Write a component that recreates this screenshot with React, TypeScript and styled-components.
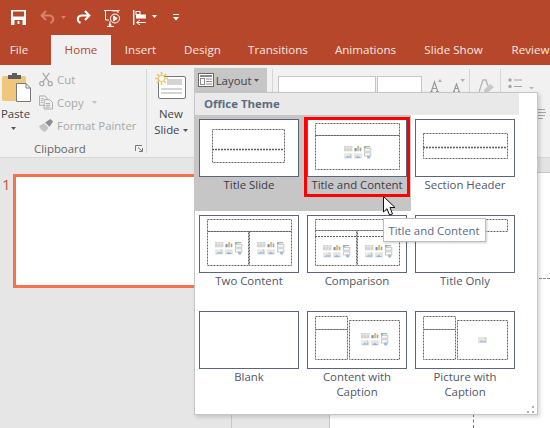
import React from "react";
import styled, { createGlobalStyle } from "styled-components";

const Global = createGlobalStyle`
  html, body { margin: 0; padding: 0; background: #fff; }
  #root { width: 550px; height: 428px; overflow: hidden; }
  * { box-sizing: border-box; }
`;

const FONT = `"Open Sans", "Noto Sans", "Liberation Sans", sans-serif`;

const Page = styled.div`
  position: relative;
  width: 550px;
  height: 428px;
  overflow: hidden;
  display: flex;
  flex-direction: column;
  font-family: ${FONT};
  font-size: 11.4px;
  color: #444;
`;

const TitleBar = styled.div`
  height: 35px;
  background: #b7472a;
  display: flex;
  align-items: flex-start;
  padding: 10px 0 0 11px;
  flex: none;
`;

const QatSlot = styled.div<{ $w: number; $top?: number }>`
  width: ${(p) => p.$w}px;
  padding-top: ${(p) => p.$top ?? 0}px;
  flex: none;
  display: flex;
`;

const TabBar = styled.div`
  height: 30px;
  flex: none;
  background: #b7472a;
  display: flex;
  overflow: hidden;
`;

const Tab = styled.div<{ $w: number; $active?: boolean; $after?: number }>`
  width: ${(p) => p.$w}px;
  margin-right: ${(p) => p.$after ?? 0}px;
  flex: none;
  display: flex;
  align-items: center;
  justify-content: center;
  white-space: nowrap;
  padding-bottom: 1px;
  font-size: 11.6px;
  color: ${(p) => (p.$active ? "#b7472a" : "#f6e7e2")};
  background: ${(p) => (p.$active ? "#f1f1f1" : "transparent")};
`;

const Ribbon = styled.div`
  height: 93px;
  flex: none;
  background: #f1f1f1;
  border-bottom: 1px solid #d8d8d8;
  display: flex;
  padding: 4px 0 3px;
`;

const Group = styled.div<{ $w: number; $divider?: boolean }>`
  width: ${(p) => p.$w}px;
  flex: none;
  height: 84px;
  display: flex;
  position: relative;
  border-right: ${(p) => (p.$divider ? "1px solid #d6d6d6" : "none")};
`;

const ClipColumn = styled.div`
  display: flex;
  flex-direction: column;
  width: 147px;
`;

const ClipBody = styled.div`
  display: flex;
  height: 73px;
  flex: none;
`;

const PasteCol = styled.div`
  width: 36px;
  display: flex;
  flex-direction: column;
  padding: 3px 0 0 2px;
  color: #444;
`;

const BigLabel = styled.div<{ $left?: number; $top?: number }>`
  margin-left: ${(p) => p.$left ?? 0}px;
  margin-top: ${(p) => p.$top ?? 0}px;
  line-height: 16px;
  white-space: nowrap;
  color: #444;
  display: flex;
  align-items: center;
  gap: 3px;
`;

const SmallCol = styled.div`
  display: flex;
  flex-direction: column;
  padding: 3px 0 0 3px;
  gap: 8px;
`;

const SmallRow = styled.div`
  height: 15px;
  display: flex;
  align-items: center;
  gap: 4px;
  color: #a8a8a8;
  white-space: nowrap;
`;

const IconBox = styled.span`
  width: 14px;
  display: flex;
  justify-content: center;
`;

const GroupFooter = styled.div`
  display: flex;
  align-items: center;
  height: 13px;
  flex: none;
  padding: 0 3px 0 34px;
  justify-content: space-between;
  color: #666;
`;

const NewCol = styled.div`
  width: 47px;
  display: flex;
  flex-direction: column;
  align-items: center;
  padding: 3px 2px 0 3px;
`;

const SlideCmds = styled.div`
  width: 79px;
  display: flex;
  flex-direction: column;
`;

const LayoutBtn = styled.div`
  width: 73px;
  height: 24px;
  margin-top: -1px;
  background: #c6c6c6;
  display: flex;
  align-items: center;
  padding-left: 4px;
  gap: 2px;
  color: #444;
`;

const FontRow = styled.div`
  display: flex;
  align-items: flex-start;
  padding: 7px 0 0 5px;
  gap: 1px;
`;

const Combo = styled.div<{ $w: number }>`
  width: ${(p) => p.$w}px;
  height: 24px;
  background: #fff;
  border: 1px solid #c6c6c6;
  display: flex;
  align-items: flex-end;
  justify-content: flex-end;
  padding: 0 3px 4px 0;
`;

const GrowIcons = styled.div`
  display: flex;
  gap: 10px;
  padding: 10px 0 0 7px;
`;

const ClearCol = styled.div`
  display: flex;
  padding: 10px 0 0 9px;
`;

const ParaCol = styled.div`
  display: flex;
  flex-direction: column;
`;

const ParaRow = styled.div`
  display: flex;
  padding: 9px 0 0 7px;
  gap: 9px;
`;

const AlignRow = styled.div`
  padding: 16px 0 0 36px;
  display: flex;
`;

const Workspace = styled.div`
  flex: 1;
  display: flex;
  background: #e6e6e6;
`;

const ThumbPane = styled.div`
  width: 232px;
  flex: none;
  border-right: 1px solid #c6c6c6;
  padding: 16px 0 0 2px;
  display: flex;
  gap: 0;
`;

const SlideNumber = styled.div`
  width: 11px;
  flex: none;
  font-size: 15px;
  line-height: 21px;
  color: #c9573a;
`;

const SlideThumb = styled.div`
  width: 200px;
  height: 114px;
  background: #fff;
  border: 3px solid #f4734f;
`;

const GrayGap = styled.div`
  width: 97px;
  flex: none;
`;

const Canvas = styled.div`
  flex: 1;
  display: flex;
  flex-direction: column;
  border-left: 1px solid #c6c6c6;
`;

const RulerStrip = styled.div`
  height: 15px;
  flex: none;
  background: #e3e3e3;
  border-bottom: 1px solid #c8c8c8;
`;

const CanvasBody = styled.div`
  flex: 1;
  background: #fff;
  position: relative;
`;

const GuideH = styled.div`
  position: absolute;
  left: 209px;
  right: 0;
  top: 105px;
  border-top: 1px dashed #8a8a8a;
`;

const GuideV = styled.div`
  position: absolute;
  left: 143px;
  bottom: 0;
  height: 14px;
  border-left: 1px dashed #777;
`;

const Menu = styled.div`
  position: absolute;
  left: 194px;
  top: 92px;
  width: 344px;
  height: 323px;
  background: #fff;
  border: 1px solid #c6c6c6;
  box-shadow: 2px 2px 4px rgba(0, 0, 0, 0.16);
`;

const MenuHeader = styled.div`
  width: 324px;
  height: 22px;
  background: #e9e9e9;
  color: #5b6b82;
  font-weight: 700;
  display: flex;
  align-items: center;
  padding: 0 0 2px 9px;
`;

const Grid = styled.div`
  display: grid;
  grid-template-columns: repeat(3, 108px);
  grid-auto-rows: 96px;
`;

const Cell = styled.div<{ $active?: boolean }>`
  position: relative;
  background: ${(p) => (p.$active ? "#c6c6c6" : "transparent")};
  padding: 4px 4px 0;
  text-align: center;
  color: ${(p) => (p.$active ? "#3d3a4c" : "#525667")};
`;

const Thumb = styled.svg`
  display: block;
  width: 100px;
  height: 58px;
  background: #fff;
  border: 1px solid #5b6579;
`;

const CellLabel = styled.div`
  line-height: 15px;
  white-space: pre-line;
`;

const RedBox = styled.div`
  position: absolute;
  left: 1px;
  top: 2px;
  width: 106px;
  height: 80px;
  border: 3.5px solid #ff0000;
  pointer-events: none;
`;

const Grip = styled.svg`
  position: absolute;
  right: 3px;
  bottom: 1px;
`;

const Tooltip = styled.div`
  position: absolute;
  left: 383px;
  top: 218px;
  width: 103px;
  height: 24px;
  background: #fff;
  border: 1px solid #bfbfbf;
  box-shadow: 1px 1px 2px rgba(0, 0, 0, 0.2);
  color: #5b6b82;
  display: flex;
  align-items: center;
  justify-content: center;
  white-space: nowrap;
  padding-right: 1px;
`;

const Cursor = styled.svg`
  position: absolute;
  left: 383px;
  top: 196px;
`;

const W = "#ffffff";
const BG = "#b7472a";
const DIM = "#d4846b";
const G = "#a8a8a8";

const Caret = ({ color = "#555", w = 5 }: { color?: string; w?: number }) => (
  <svg width={w} height={3} viewBox="0 0 5 3"><path d="M0 0H5L2.5 3Z" fill={color} /></svg>
);

const SaveIcon = () => (
  <svg width={15} height={15} viewBox="0 0 15 15">
    <rect width={15} height={15} fill={W} />
    <rect x={2} y={1.5} width={11} height={5} fill={BG} />
    <rect x={3.5} y={10} width={8} height={5} fill={BG} />
    <rect x={6.5} y={11} width={2} height={3} fill={W} />
  </svg>
);

const ArrowIcon = ({ color, flip }: { color: string; flip?: boolean }) => (
  <svg width={15} height={14} viewBox="0 0 15 14" style={flip ? { transform: "scaleX(-1)" } : undefined}>
    <path d="M6 1 L1.6 5.5 L6 10 M2 5.5 H9 C14 5.5 14.5 11 10.5 13" fill="none" stroke={color} strokeWidth={2} />
  </svg>
);

const ShowIcon = () => (
  <svg width={17} height={17} viewBox="0 0 17 17" fill="none" stroke={W}>
    <path d="M0 .5H15.5M1.5 1V10H5M8.5 1H14V3" />
    <circle cx={11} cy={8.5} r={4.5} />
    <path d="M9.6 6V11L13.2 8.5Z" fill={W} />
    <path d="M3 16.5H10M6 11V15" />
    <circle cx={6} cy={15} r={1} fill={W} />
  </svg>
);

const AlignIcon = () => (
  <svg width={15} height={15} viewBox="0 0 15 15">
    <rect x={0} y={0} width={1.4} height={15} fill={W} />
    <rect x={3} y={1.5} width={4} height={3} fill="none" stroke={W} />
    <rect x={3} y={4.5} width={10} height={4} fill={W} />
    <path d="M13 12.5H4M7 10L3.5 12.5L7 15" stroke={W} fill="none" />
  </svg>
);

const QatMore = () => (
  <svg width={6} height={7} viewBox="0 0 6 7">
    <rect width={6} height={1} fill={W} />
    <path d="M0 3H6L3 6.5Z" fill={W} />
  </svg>
);

const PasteIcon = () => (
  <svg width={29} height={30} viewBox="0 0 29 30">
    <rect x={0} y={4} width={24} height={25} rx={1.5} fill="#f0c67d" />
    <path d="M6 3H10V1H15V3H19V7H6Z" fill="#5e5e5e" />
    <path d="M14.5 11.5H24L28.5 16V29.5H14.5Z" fill="#fff" stroke="#7b7b7b" />
    <path d="M24 11.5V16H28.5" fill="none" stroke="#7b7b7b" />
  </svg>
);

const CutIcon = () => (
  <svg width={15} height={15} viewBox="0 0 15 15" fill="none" stroke={G} strokeWidth={1.3}>
    <circle cx={3} cy={12} r={2.2} />
    <circle cx={12} cy={12} r={2.2} />
    <path d="M4.2 10 L11 .5 M10.8 10 L4 .5" />
  </svg>
);

const CopyIcon = () => (
  <svg width={15} height={15} viewBox="0 0 15 15" fill="#f1f1f1" stroke={G}>
    <path d="M.5.5H6.5L8.5 2.5V10.5H.5Z" />
    <path d="M5.5 4.5H11.5L14.5 7.5V14.5H5.5Z" />
    <path d="M7 8.5H12M7 10.5H12M7 12.5H12M2 3.5H5M2 5.5H4M2 7.5H4" />
  </svg>
);

const BrushIcon = () => (
  <svg width={16} height={15} viewBox="0 0 16 15">
    <path d="M0 8 L6 5 L11 10 L7 15 C4 14 1 11 0 8Z" fill="#c4c4c4" />
    <path d="M7 4 L13 0 L16 3 L12 9Z" fill="#8e8e8e" />
  </svg>
);

const Launcher = () => (
  <svg width={8} height={7} viewBox="0 0 8 7" fill="none" stroke="#777">
    <path d="M.5 6V.5H7" />
    <path d="M3 2.5L7 6M7.5 3V6.5H4" />
  </svg>
);

const NewSlideIcon = () => (
  <svg width={31} height={27} viewBox="0 0 31 27">
    <rect x={3.5} y={4.5} width={27} height={22} rx={1.5} fill="#fff" stroke="#777" />
    <rect x={12} y={7} width={15} height={6} fill="#d4d4d4" />
    <path d="M6 17H27M6 21H27" stroke="#aaa" />
    <g stroke="#f0c46a" strokeWidth={1.6}>
      <path d="M6.5 0V13M0 6.5H13M2 2L11 11M11 2L2 11" />
    </g>
    <circle cx={6.5} cy={6.5} r={3} fill="#fff" stroke="#f0c46a" />
  </svg>
);

const LayoutIcon = () => (
  <svg width={16} height={14} viewBox="0 0 16 14" fill="none">
    <rect x={.5} y={.5} width={15} height={13} fill="#fff" stroke="#666" />
    <rect x={2} y={2} width={12} height={2} fill="#8a8a8a" />
    <rect x={2.5} y={5.5} width={4} height={6} stroke="#8a8a8a" />
    <path d="M8 6H14M8 8.5H14M8 11H14" stroke="#8a8a8a" />
  </svg>
);

const GrowIcon = ({ up }: { up?: boolean }) => (
  <svg width={13} height={13} viewBox="0 0 13 13">
    <path d={up ? "M1 12.5H3.5M7 12.5H10M2.5 12L5.5 3L8.5 12M3.5 9.5H7.5" : "M1 12.5H3M6 12.5H8M2 12L4.5 5L7 12M3 9.5H6"} fill="none" stroke="#9a9a9a" strokeWidth={1.2} />
    <path d={up ? "M9 3L11 0L13 3Z" : "M8.5 0H13L10.7 3Z"} fill="#b0b0b0" />
  </svg>
);

const ClearIcon = () => (
  <svg width={15} height={14} viewBox="0 0 15 14">
    <path d="M0 13L4 1H7L9 7" fill="none" stroke="#b5b5b5" strokeWidth={1.3} />
    <path d="M5 11L11 5L15 8L9 13.5H6Z" fill="#c8c8c8" />
  </svg>
);

const BulletsIcon = () => (
  <svg width={33} height={12} viewBox="0 0 33 12">
    <circle cx={2} cy={2} r={1.7} fill="#a5a5a5" />
    <circle cx={2} cy={8.5} r={1.7} fill="#a5a5a5" />
    <path d="M6 2H14M6 8.5H14" stroke="#a5a5a5" />
    <path d="M21 9H26L23.5 11.5Z" fill="#b5b5b5" />
  </svg>
);

const NumberIcon = () => (
  <svg width={8} height={15} viewBox="0 0 8 15" fill="none" stroke="#a5a5a5">
    <path d="M1 .5H2.5V4M1 6H3.5V8H1V10H3.5M1 11.5H4V14.5H1M6 2H8M6 8H8M6 13H8" />
  </svg>
);

const AlignLines = () => (
  <svg width={9} height={11} viewBox="0 0 9 11" stroke="#a5a5a5">
    <path d="M0 .5H8M0 3.5H9M0 6.5H8M0 9.5H6" />
  </svg>
);

/* The small six-tile "content" placeholder symbol used inside the layout previews */
const ContentGlyph = ({ x, y }: { x: number; y: number }) => (
  <g transform={`translate(${x} ${y}) scale(1.05)`}>
    <rect x={0} y={0} width={8} height={5} fill="#d2d2d2" />
    <path d="M0 1.5H8M2.7 0V5M5.3 0V5" stroke="#f1f1f1" strokeWidth={.5} />
    <rect x={10} y={2} width={2} height={3} fill="#6f8fb5" />
    <rect x={12.5} y={0} width={2} height={5} fill="#e6bd6e" />
    <rect x={15} y={1.5} width={1.5} height={3.5} fill="#8faac8" />
    <path d="M19 .8H25M19 .8L21 2.2" stroke="#7fa88f" fill="none" />
    <rect x={19.5} y={2.5} width={6} height={2.5} fill="none" stroke="#c8c8c8" />
    <rect x={0} y={7} width={8} height={5} fill="#e8e8e8" />
    <path d="M1 11L3.5 9L5 10L7 8.5V11.5H1Z" fill="#a9c6e2" />
    <circle cx={6} cy={8} r={.8} fill="#eec77e" />
    <rect x={9.5} y={7} width={7.5} height={5} fill="#e4e4e4" />
    <path d="M10.5 11.5L13 9.5L16.5 11.5Z" fill="#90b2d6" />
    <rect x={19.5} y={6.5} width={6} height={3} fill="none" stroke="#c8c8c8" />
    <circle cx={23.5} cy={10.5} r={1.7} fill="#9fbfdc" />
  </g>
);

const PictureGlyph = ({ x, y }: { x: number; y: number }) => (
  <g transform={`translate(${x} ${y})`}>
    <rect x={0} y={0} width={9} height={6} fill="#e6e6e6" />
    <path d="M1 5.5L3.5 3L5.5 4.5L8 3V5.5Z" fill="#a3c2e0" />
    <circle cx={7} cy={1.5} r={.8} fill="#eec77e" />
  </g>
);

type Box = [number, number, number, number];
type LayoutDef = {
  label: string;
  active?: boolean;
  selected?: boolean;
  boxes?: Box[];
  rules?: [number, number, number, number][];
  glyphs?: [number, number][];
  picture?: [number, number];
};

const layouts: LayoutDef[] = [
  { label: "Title Slide", active: true, boxes: [[13, 10, 72, 33]], rules: [[13, 85, 30, 1.4]] },
  { label: "Title and Content", active: true, selected: true, boxes: [[8, 4, 84, 12], [8, 16, 84, 34]], glyphs: [[37, 27]] },
  { label: "Section Header", boxes: [[8, 14, 84, 25]], rules: [[8, 92, 28, 1.4]] },
  { label: "Two Content", boxes: [[8, 4, 84, 12], [8, 16, 41, 34], [50, 16, 42, 34]], glyphs: [[16, 27], [58, 27]] },
  { label: "Comparison", boxes: [[8, 4, 84, 11], [8, 15, 41, 35], [50, 15, 42, 35]], rules: [[8, 92, 21, 1]], glyphs: [[16, 30], [58, 30]] },
  { label: "Title Only", boxes: [[8, 4, 84, 12]] },
  { label: "Blank" },
  { label: "Content with\nCaption", boxes: [[8, 5, 32, 13], [8, 18, 32, 30], [42, 9, 50, 39]], glyphs: [[54, 22]] },
  { label: "Picture with\nCaption", boxes: [[8, 5, 32, 13], [8, 18, 32, 30], [42, 9, 50, 39]], picture: [63, 26] },
];

const LayoutCell = ({ item }: { item: LayoutDef }) => (
  <Cell $active={item.active}>
    <Thumb viewBox="1 1 98 56">
      {item.boxes?.map(([x, y, w, h], i) => (
        <rect key={i} x={x + 0.5} y={y + 0.5} width={w} height={h} fill="none" stroke="#666" strokeDasharray="2 1" />
      ))}
      {item.rules?.map(([a, b, y, weight], i) => (
        <path key={i} d={`M${a} ${y + 0.5}H${b}`} stroke="#5f5f5f" strokeWidth={weight} strokeDasharray="2 1" />
      ))}
      {item.glyphs?.map(([x, y], i) => <ContentGlyph key={i} x={x} y={y} />)}
      {item.picture && <PictureGlyph x={item.picture[0]} y={item.picture[1]} />}
    </Thumb>
    <CellLabel>{item.label}</CellLabel>
    {item.selected && <RedBox />}
  </Cell>
);

export default function App() {
  return (
    <Page>
      <Global />
      <TitleBar>
        <QatSlot $w={29}><SaveIcon /></QatSlot>
        <QatSlot $w={21}><ArrowIcon color={DIM} /></QatSlot>
        <QatSlot $w={15} $top={6}><Caret color={DIM} /></QatSlot>
        <QatSlot $w={28}><ArrowIcon color={W} flip /></QatSlot>
        <QatSlot $w={29}><ShowIcon /></QatSlot>
        <QatSlot $w={19}><AlignIcon /></QatSlot>
        <QatSlot $w={21} $top={5}><Caret color={W} /></QatSlot>
        <QatSlot $w={8} $top={4}><QatMore /></QatSlot>
      </TitleBar>
      <TabBar>
        <Tab $w={38} $after={13}>File</Tab>
        <Tab $w={60} $active>Home</Tab>
        <Tab $w={59}>Insert</Tab>
        <Tab $w={65}>Design</Tab>
        <Tab $w={86}>Transitions</Tab>
        <Tab $w={89}>Animations</Tab>
        <Tab $w={87}>Slide Show</Tab>
        <Tab $w={67}>Review</Tab>
      </TabBar>
      <Ribbon>
        <Group $w={147} $divider>
          <ClipColumn>
            <ClipBody>
              <PasteCol>
                <PasteIcon />
                <BigLabel $left={-1} $top={4}>Paste</BigLabel>
                <BigLabel $left={9} $top={5}><Caret /></BigLabel>
              </PasteCol>
              <SmallCol>
                <SmallRow><IconBox><CutIcon /></IconBox>Cut</SmallRow>
                <SmallRow><IconBox><CopyIcon /></IconBox>Copy<IconBox><Caret color="#c0c0c0" /></IconBox></SmallRow>
                <SmallRow><IconBox><BrushIcon /></IconBox>Format Painter</SmallRow>
              </SmallCol>
            </ClipBody>
            <GroupFooter>Clipboard<Launcher /></GroupFooter>
          </ClipColumn>
        </Group>
        <Group $w={126} $divider>
          <NewCol>
            <NewSlideIcon />
            <BigLabel $top={7}>New</BigLabel>
            <BigLabel>Slide<Caret /></BigLabel>
          </NewCol>
          <SlideCmds>
            <LayoutBtn><LayoutIcon />Layout<Caret /></LayoutBtn>
          </SlideCmds>
        </Group>
        <Group $w={197} $divider>
          <FontRow>
            <Combo $w={98}><Caret color="#a5a5a5" /></Combo>
            <Combo $w={45}><Caret color="#a5a5a5" /></Combo>
          </FontRow>
          <GrowIcons>
            <GrowIcon up />
            <GrowIcon />
          </GrowIcons>
        </Group>
        <Group $w={31} $divider>
          <ClearCol><ClearIcon /></ClearCol>
        </Group>
        <Group $w={49}>
          <ParaCol>
            <ParaRow><BulletsIcon /><NumberIcon /></ParaRow>
            <AlignRow><AlignLines /></AlignRow>
          </ParaCol>
        </Group>
      </Ribbon>
      <Workspace>
        <ThumbPane>
          <SlideNumber>1</SlideNumber>
          <SlideThumb />
        </ThumbPane>
        <GrayGap />
        <Canvas>
          <RulerStrip />
          <CanvasBody>
            <GuideH />
            <GuideV />
          </CanvasBody>
        </Canvas>
      </Workspace>
      <Menu>
        <MenuHeader>Office Theme</MenuHeader>
        <Grid>
          {layouts.map((l) => <LayoutCell key={l.label} item={l} />)}
        </Grid>
        <Grip width={7} height={7} viewBox="0 0 7 7" fill="#b0b0b0">
          <rect x={5} y={0} width={2} height={2} />
          <rect x={0} y={5} width={2} height={2} />
          <rect x={5} y={5} width={2} height={2} />
        </Grip>
      </Menu>
      <Tooltip>Title and Content</Tooltip>
      <Cursor width={14} height={21} viewBox="0 0 14 21">
        <path d="M.5.5V16L4 12.7L6.5 19L9.5 18L7 11.5H12Z" fill="#fff" stroke="#111" />
      </Cursor>
    </Page>
  );
}
